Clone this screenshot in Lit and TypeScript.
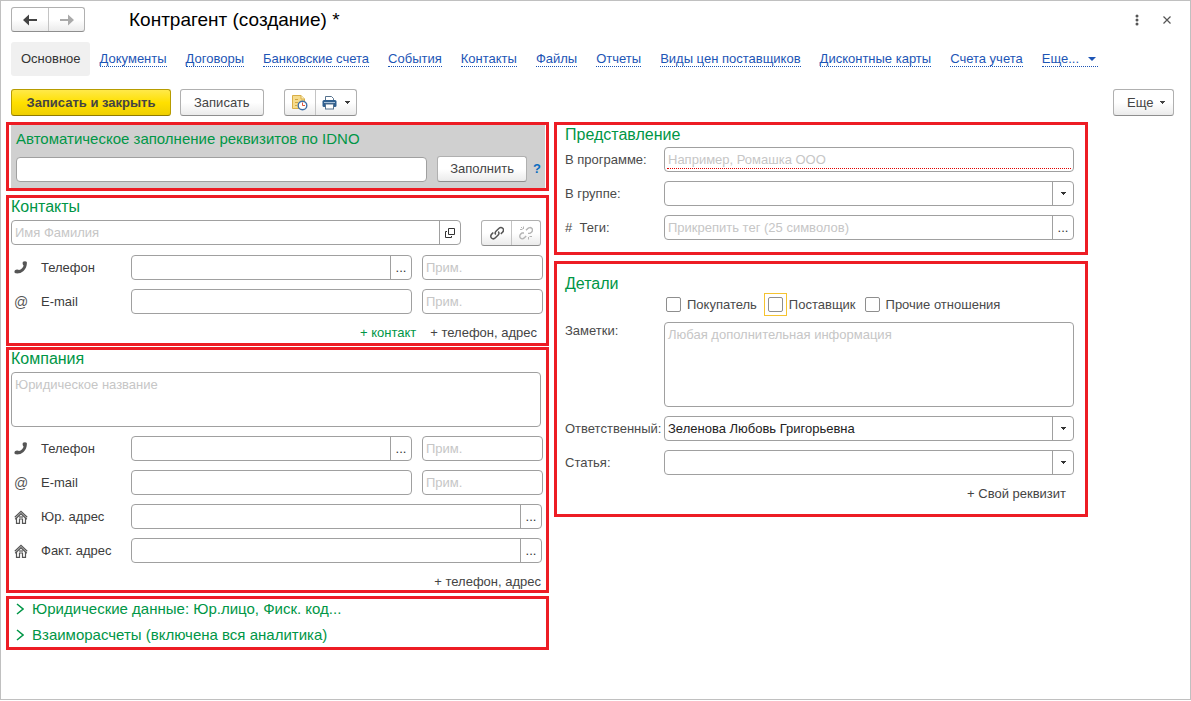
import { LitElement, html, css, svg, nothing } from "lit";
import { customElement } from "lit/decorators.js";

const links = [
  "Документы",
  "Договоры",
  "Банковские счета",
  "События",
  "Контакты",
  "Файлы",
  "Отчеты",
  "Виды цен поставщиков",
  "Дисконтные карты",
  "Счета учета",
];

const caret = html`<svg class="caret" width="5" height="3" viewBox="0 0 5 3" aria-hidden="true">
  <path d="M0 0h5v1H4v1H3v1H2V2H1V1H0z" fill="currentColor" />
</svg>`;

const arrow = (flip: boolean) => html`<svg width="14" height="12" viewBox="0 0 14 12" aria-hidden="true">
  <g transform=${flip ? "translate(14 0) scale(-1 1)" : ""}>
    <path d="M0 6L6 .5V5H14V7H6V11.500Z" fill="currentColor" />
  </g>
</svg>`;

const phoneIcon = html`<svg class="glyph" width="14" height="13" viewBox="0 0 14 13" aria-hidden="true">
  <path
    d="M9 .8C10.200 -.1 12.200 0 12.800 1.100C13.200 4.300 12 7.700 9.500 9.900C7.200 11.900 4.400 12.700 1.600 12.300C.3 11.900 .1 10.300 1 9.200C2.100 8.200 4.100 8.200 5.100 9.100C7.200 8.300 8.800 6.800 9.600 4.700C8.500 3.800 8.300 1.900 9 .8Z"
    fill="#555"
  />
</svg>`;

const houseIcon = html`<svg class="glyph" width="14" height="14" viewBox="0 0 14 14" aria-hidden="true">
  <g fill="none" stroke="#555" stroke-width="1.200">
    <path d="M.8 7.300L7 1.300L13.200 7.300" />
    <path d="M1.200 9.200L7 3.700L12.800 9.200" />
    <path d="M2.500 8V13.400H5.500V9H8.500V13.400H11.500V8" />
    <path d="M5 7H9" />
  </g>
</svg>`;

const linkShape = svg`
  <path d="M5.800 8.600C4.800 7.500 5 6.300 6 5.300L8.800 2.500C10 1.300 11.700 1.300 12.700 2.300C13.700 3.300 13.700 5 12.500 6.200L10.800 7.900" />
  <path d="M8.200 5.600C9.300 6.600 9.200 8 8.200 9L5.400 11.800C4.200 13 2.500 13 1.500 12C.5 11 .5 9.300 1.700 8.100L3.300 6.500" />`;

const linkIcon = html`<svg width="14" height="14" viewBox="0 0 14 14" aria-hidden="true">
  <g fill="none" stroke="currentColor" stroke-width="1.500">${linkShape}</g>
</svg>`;

const unlinkIcon = html`<svg width="14" height="14" viewBox="0 0 14 14" aria-hidden="true">
  <g fill="none" stroke="currentColor" stroke-width="1.400">
    <path d="M7 4.300L8.800 2.500C10 1.300 11.700 1.300 12.700 2.300C13.700 3.300 13.700 5 12.500 6.200L11 7.400H9" />
    <path d="M7.200 10L5.400 11.800C4.200 13 2.500 13 1.500 12C.5 11 .5 9.300 1.700 8.100L3 7H5" />
    <path d="M4.500 .5V3M1 3.500H3.500M9.500 11V13.500M10.500 10.500H13M2 1L3.500 2.500" stroke-width="1" />
  </g>
</svg>`;

const noteIcon = html`<svg width="17" height="17" viewBox="0 0 17 17" aria-hidden="true">
  <path d="M1.500 1.500H10L13.500 5V14.500H1.500Z" fill="#f6dc8c" stroke="#d8ae48" />
  <path d="M10 1.500V5H13.500" fill="#fff3c4" stroke="#d8ae48" />
  <path d="M4 5.500H7M4 8.500H7M4 11.500H6" stroke="#d3a741" />
  <circle cx="11.500" cy="11.500" r="4.300" fill="#fff" stroke="#3f6fa5" stroke-width="1.400" />
  <path d="M11.500 8.500V11.500H14" fill="none" stroke="#e0563b" />
</svg>`;

const printIcon = html`<svg width="15" height="15" viewBox="0 0 15 15" aria-hidden="true">
  <path d="M3.500 5V1.500H9.500L11.500 3.500V5" fill="#fff" stroke="#55718d" />
  <rect x="0.500" y="5" width="14" height="7" rx="1.500" fill="#2f5f8f" />
  <path d="M2 7.500H13" stroke="#a9c1d9" />
  <rect x="3.500" y="9" width="8" height="5" fill="#fff" stroke="#55718d" />
</svg>`;

const openIcon = html`<svg width="10" height="10" viewBox="0 0 10 10" aria-hidden="true">
  <g fill="none" stroke="currentColor">
    <path d="M3.500 .5H9.500V6.500H3.500Z" />
    <path d="M2 3.500H.5V9.500H6.500V8" />
  </g>
</svg>`;

const chevron = html`<svg width="8" height="12" viewBox="0 0 8 12" aria-hidden="true">
  <path d="M1 1L7 6L1 11" fill="none" stroke="currentColor" stroke-width="1.500" />
</svg>`;

@customElement("app-root")
export class AppRoot extends LitElement {
  static styles = css`
    :host {
      display: block;
      font: 13px/16px "Liberation Sans", Arial, sans-serif;
      color: #3c3c3c;
      background: #fff;
    }
    *, *::before, *::after { box-sizing: border-box; }
    svg { display: block; flex: none; }
    h1, h2 { margin: 0; font-weight: 400; }
    button, input, select, textarea { font: inherit; color: inherit; margin: 0; }
    button { cursor: pointer; padding: 0; background: none; border: 0; }
    .window {
      min-height: calc(100vh - 1px);
      border: 1px solid #c0c0c0;
      padding: 6px 0 16px;
    }
    .titlebar {
      display: flex;
      align-items: center;
      padding: 0 16px 0 10px;
      height: 25px;
    }
    .titlebar h1 { flex: 1; margin-left: 44px; font-size: 19px; line-height: 24px; color: #000; }
    .history, .tools, .pair {
      display: flex;
      border: 1px solid #b0b0b0;
      border-bottom-color: #8e8e8e;
      border-radius: 3px;
      background: linear-gradient(#fff 50%, #ebebeb);
    }
    .history button, .tools button, .pair button {
      display: flex;
      align-items: center;
      justify-content: center;
    }
    .history button { width: 36px; height: 23px; color: #444; }
    .history button + button, .tools button + button, .pair button + button { border-left: 1px solid #c4c4c4; }
    .history button + button { color: #aaa; }
    .winbtn { display: flex; justify-content: center; width: 14px; color: #555; }
    .winbtn + .winbtn { margin-left: 16px; }
    nav { display: flex; align-items: center; margin-top: 10px; padding: 0 10px; height: 34px; }
    nav a { margin: 1px 9px 0 10px; line-height: 14px; color: #1d55b5; text-decoration: none; white-space: nowrap; border-bottom: 1px dotted #1d55b5; }
    nav a.current { margin: 0; padding: 0 9px 0 10px; line-height: 34px; background: #f0f0f0; color: #333; border: 0; border-radius: 3px; }
    nav a.more { display: flex; align-items: center; gap: 9px; padding-right: 2px; }
    .commands { display: flex; align-items: center; margin-top: 13px; padding: 0 16px 0 10px; }
    .btn {
      height: 27px;
      padding: 0 13px;
      border: 1px solid #b0b0b0;
      border-bottom-color: #8e8e8e;
      border-radius: 3px;
      background: linear-gradient(#fff 50%, #ebebeb);
      color: #444;
      white-space: nowrap;
    }
    .primary { min-width: 160px; margin-right: 9px; border-color: #b79c00; border-bottom-color: #8f7a00; background: linear-gradient(#ffe94a, #ffe000 50%, #efcf00); font-weight: 700; }
    .tools { margin-left: 20px; height: 27px; }
    .tools button { width: 30px; }
    .tools button + button { width: 41px; gap: 8px; }
    .commands .end { display: flex; align-items: center; gap: 7px; min-width: 61px; margin-left: auto; padding-right: 7px; }
    .columns {
      display: grid;
      grid-template-columns: minmax(0, 543fr) minmax(0, 534fr);
      gap: 5px;
      align-items: start;
      margin-top: 6px;
      padding: 0 102px 0 5px;
    }
    section { border: 3px solid #ed1c24; }
    h2 { font-size: 16px; line-height: 18px; color: #009646; }
    .auto { padding: 0 1px 0 2px; }
    .auto h2 { font-size: 15px; }
    .shade { padding: 5px 4px 6px 5px; background: #d0d0d0; }
    .fillrow { display: flex; align-items: center; margin-top: 8px; }
    .fillrow .box { flex: 1; }
    .fillrow .btn { height: 26px; margin-left: 10px; padding: 0 12px; }
    .help { margin-left: 6px; width: 8px; font-weight: 700; color: #0a6cc0; }
    .contacts { margin-top: 4px; padding: 0 3px 2px 2px; }
    .company { margin-top: 1px; padding: 0 3px 0 2px; }
    .folds { margin-top: 3px; padding: 0 3px 0 7px; }
    .box {
      display: flex;
      min-width: 0;
      height: 25px;
      border: 1px solid #a0a0a0;
      border-radius: 4px;
      background: #fff;
      overflow: hidden;
    }
    .box input, .box select {
      flex: 1;
      width: 100%;
      min-width: 0;
      height: 23px;
      padding: 0 3px;
      border: 0;
      outline: 0;
      background: transparent;
      color: #222;
    }
    .box select { appearance: none; grid-area: 1 / 1 / 2 / 3; }
    .box.drop { display: grid; grid-template-columns: minmax(0, 1fr) 21px; }
    .drop .tail { grid-area: 1 / 2 / 2 / 3; pointer-events: none; }
    .tail {
      display: flex;
      align-items: center;
      justify-content: center;
      flex: none;
      width: 21px;
      height: 23px;
      border-left: 1px solid #a0a0a0;
      color: #333;
    }
    ::placeholder { color: #c6c6c6; opacity: 1; }
    textarea {
      display: block;
      width: 100%;
      padding: 4px 3px;
      border: 1px solid #a0a0a0;
      border-radius: 4px;
      resize: none;
      outline: 0;
    }
    .person { display: flex; gap: 20px; margin-top: 4px; padding-right: 2px; }
    .person .box { flex: 1; }
    .pair { height: 26px; }
    .pair button { width: 29px; color: #555; }
    .pair button + button { color: #b4b4b4; }
    .row {
      display: grid;
      grid-template-columns: 30px 90px minmax(0, 281fr) minmax(0, 131fr);
      align-items: center;
      margin-top: 9px;
    }
    .row .note { margin-left: 10px; }
    .row.wide { padding-right: 1px; }
    .row.wide .box { grid-column: 3 / 5; }
    .row .glyph { margin-left: 3px; }
    .at { margin-left: 3px; font-size: 14px; color: #555; }
    .adders { display: flex; justify-content: flex-end; gap: 14px; margin-top: 11px; padding-right: 6px; }
    .adders button { color: #444; }
    .adders .green { color: #009646; }
    .company textarea { width: calc(100% - 2px); height: 55px; margin-top: 4px; }
    .company .adders { padding-right: 2px; }
    .fold { display: flex; align-items: center; gap: 8px; height: 24px; width: 100%; color: #009646; font-size: 15px; line-height: 18px; text-align: left; }
    .fold:first-child { height: 19px; margin-bottom: 5px; }
    .view { padding: 1px 11px 12px 8px; }
    .details { margin-top: 6px; padding: 11px 11px 12px 8px; }
    .line {
      display: grid;
      grid-template-columns: 99px minmax(0, 1fr);
      align-items: center;
      margin-top: 9px;
    }
    .line label { color: #4a4a4a; white-space: nowrap; }
    .view .line:nth-of-type(1) { margin-top: 3px; }
    .line.top { align-items: start; margin-top: 6px; }
    .line.top label { padding-top: 1px; }
    .line textarea { height: 85px; }
    .required { position: relative; }
    .required::after { content: ""; position: absolute; left: 2px; right: 2px; bottom: 2px; border-bottom: 1px dotted #e00000; }
    .checks { display: flex; align-items: center; margin: 0 0 0 99px; }
    .checks label { display: flex; align-items: center; white-space: nowrap; color: #4a4a4a; margin-right: 7px; }
    .checks input { appearance: none; width: 15px; height: 15px; margin: 4px 6px 4px 2px; border: 1px solid #8e8e8e; border-radius: 2px; background: #fff; }
    .checks .focus input { margin: 0; }
    .ring { display: flex; padding: 3px; border: 1px solid #f5c330; margin-right: 2px; }
    .details .adders { padding-right: 8px; }
  `;

  private box(id: string, placeholder = "", tail: unknown = nothing, label = "", extra = "") {
    return html`<div class="box ${extra}">
      <input id=${id} type="text" placeholder=${placeholder} aria-label=${label || nothing} />
      ${tail === nothing ? nothing : html`<button class="tail" aria-label="Выбрать">${tail}</button>`}
    </div>`;
  }

  private drop(id: string, value = "") {
    return html`<div class="box drop">
      <select id=${id}><option>${value}</option></select>
      <span class="tail">${caret}</span>
    </div>`;
  }

  private phoneAndMail(prefix: string) {
    return html`
      <div class="row">
        ${phoneIcon}<label for="${prefix}-phone">Телефон</label>
        ${this.box(`${prefix}-phone`, "", "...")}
        ${this.box(`${prefix}-phone-note`, "Прим.", nothing, "Примечание к телефону", "note")}
      </div>
      <div class="row">
        <span class="at" aria-hidden="true">@</span><label for="${prefix}-mail">E-mail</label>
        ${this.box(`${prefix}-mail`)}
        ${this.box(`${prefix}-mail-note`, "Прим.", nothing, "Примечание к e-mail", "note")}
      </div>
    `;
  }

  private address(id: string, label: string) {
    return html`<div class="row wide">
      ${houseIcon}<label for=${id}>${label}</label>${this.box(id, "", "...")}
    </div>`;
  }

  render() {
    return html`
      <main class="window">
        <header class="titlebar">
          <div class="history">
            <button aria-label="Назад">${arrow(false)}</button>
            <button aria-label="Вперед">${arrow(true)}</button>
          </div>
          <h1>Контрагент (создание) *</h1>
          <button class="winbtn" aria-label="Меню">
            <svg width="4" height="12" viewBox="0 0 4 12">
              <g fill="currentColor"><circle cx="2" cy="2" r="1.500" /><circle cx="2" cy="6" r="1.500" /><circle cx="2" cy="10" r="1.500" /></g>
            </svg>
          </button>
          <button class="winbtn" aria-label="Закрыть">
            <svg width="8" height="8" viewBox="0 0 8 8"><path d="M.5 .5L7.500 7.500M7.500 .5L.5 7.500" stroke="currentColor" stroke-width="1.200" /></svg>
          </button>
        </header>

        <nav>
          <a class="current" href="#main">Основное</a>
          ${links.map((text) => html`<a href="#">${text}</a>`)}
          <a class="more" href="#more">Еще...
            <svg width="8" height="4" viewBox="0 0 8 4" aria-hidden="true"><path d="M0 0H8L4 4Z" fill="currentColor" /></svg>
          </a>
        </nav>

        <div class="commands">
          <button class="btn primary">Записать и закрыть</button>
          <button class="btn">Записать</button>
          <div class="tools">
            <button aria-label="Напоминание">${noteIcon}</button>
            <button aria-label="Печать">${printIcon}${caret}</button>
          </div>
          <button class="btn end">Еще ${caret}</button>
        </div>

        <div class="columns">
          <div>
            <section class="auto">
              <div class="shade">
                <h2>Автоматическое заполнение реквизитов по IDNO</h2>
                <div class="fillrow">
                  ${this.box("idno", "", nothing, "IDNO")}
                  <button class="btn">Заполнить</button>
                  <button class="help" aria-label="Справка">?</button>
                </div>
              </div>
            </section>

            <section class="contacts">
              <h2>Контакты</h2>
              <div class="person">
                ${this.box("person", "Имя Фамилия", openIcon, "Имя Фамилия")}
                <div class="pair">
                  <button aria-label="Связать">${linkIcon}</button>
                  <button aria-label="Разорвать связь">${unlinkIcon}</button>
                </div>
              </div>
              ${this.phoneAndMail("contact")}
              <div class="adders">
                <button class="green">+ контакт</button>
                <button>+ телефон, адрес</button>
              </div>
            </section>

            <section class="company">
              <h2>Компания</h2>
              <textarea aria-label="Юридическое название" placeholder="Юридическое название"></textarea>
              ${this.phoneAndMail("company")}
              ${this.address("legal", "Юр. адрес")}
              ${this.address("actual", "Факт. адрес")}
              <div class="adders"><button>+ телефон, адрес</button></div>
            </section>

            <section class="folds">
              <button class="fold">${chevron}Юридические данные: Юр.лицо, Фиск. код...</button>
              <button class="fold">${chevron}Взаиморасчеты (включена вся аналитика)</button>
            </section>
          </div>

          <div>
            <section class="view">
              <h2>Представление</h2>
              <div class="line">
                <label for="name">В программе:</label>
                ${this.box("name", "Например, Ромашка ООО", nothing, "", "required")}
              </div>
              <div class="line"><label for="group">В группе:</label>${this.drop("group")}</div>
              <div class="line">
                <label for="tags">#&nbsp; Теги:</label>
                ${this.box("tags", "Прикрепить тег (25 символов)", "...")}
              </div>
            </section>

            <section class="details">
              <h2>Детали</h2>
              <div class="checks">
                <label><input type="checkbox" />Покупатель</label>
                <label class="focus"><span class="ring"><input type="checkbox" /></span>Поставщик</label>
                <label><input type="checkbox" />Прочие отношения</label>
              </div>
              <div class="line top">
                <label for="notes">Заметки:</label>
                <textarea id="notes" placeholder="Любая дополнительная информация"></textarea>
              </div>
              <div class="line"><label for="owner">Ответственный:</label>${this.drop("owner", "Зеленова Любовь Григорьевна")}</div>
              <div class="line"><label for="item">Статья:</label>${this.drop("item")}</div>
              <div class="adders"><button>+ Свой реквизит</button></div>
            </section>
          </div>
        </div>
      </main>
    `;
  }
}
